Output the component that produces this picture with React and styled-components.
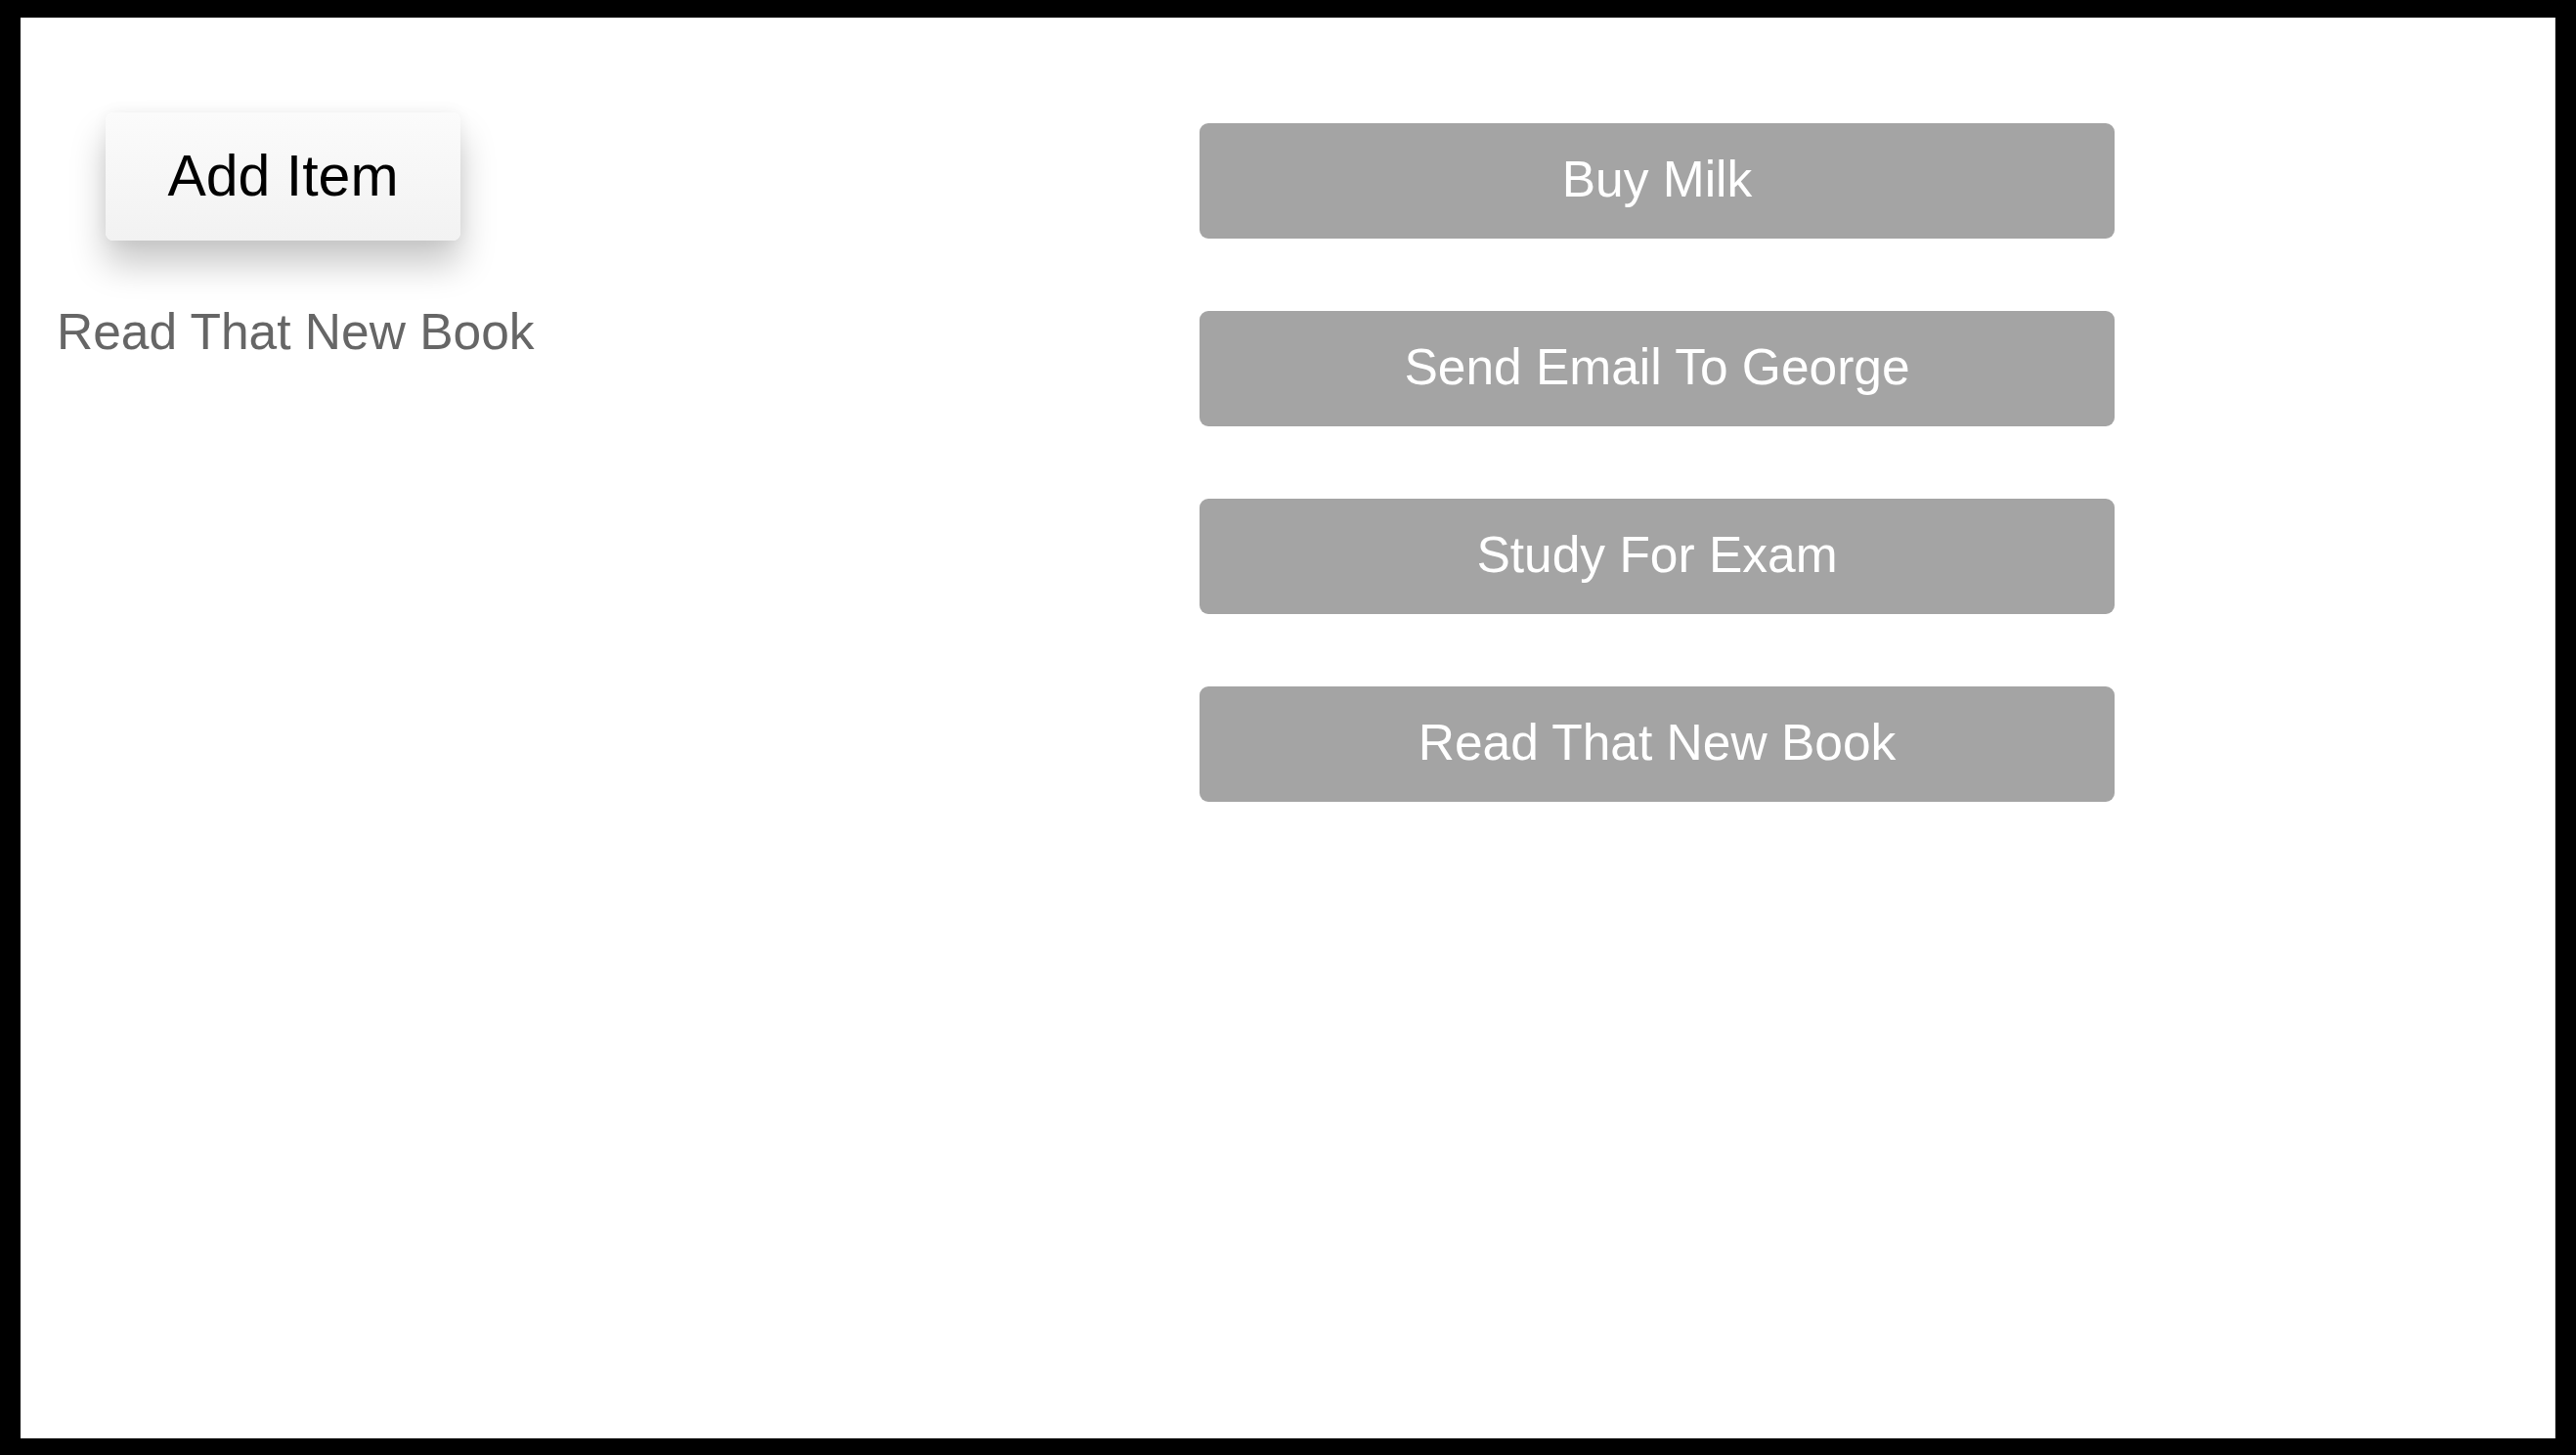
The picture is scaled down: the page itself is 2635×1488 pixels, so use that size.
import React from "react";
import styled, { createGlobalStyle } from "styled-components";

const GlobalStyle = createGlobalStyle`
  html, body {
    margin: 0;
    padding: 0;
    background: #000;
  }
  body {
    font-family: "Liberation Sans", Arial, sans-serif;
  }
`;

const Frame = styled.div`
  box-sizing: border-box;
  width: 2635px;
  height: 1488px;
  padding: 18px 21px 17px 21px;
  background: #000;
`;

const Screen = styled.main`
  box-sizing: border-box;
  height: 100%;
  background: #fff;
  border-right: 1px solid #dcdcdc;
  display: grid;
  grid-template-columns: 1206px 936px;
  align-items: start;
`;

const LeftColumn = styled.section`
  display: flex;
  flex-direction: column;
  align-items: flex-start;
  padding: 97px 0 0 37px;
`;

const AddButton = styled.button`
  box-sizing: border-box;
  width: 363px;
  height: 131px;
  margin-left: 50px;
  border: none;
  border-radius: 8px;
  background: linear-gradient(#fbfbfb, #f2f2f2);
  box-shadow: 0 24px 36px rgba(0, 0, 0, 0.22), 0 0 16px rgba(0, 0, 0, 0.05);
  font-family: "Liberation Sans", Arial, sans-serif;
  font-size: 59px;
  color: #000;
  line-height: 1;
  padding: 0;
  cursor: pointer;
`;

const LastItem = styled.p`
  margin: 68px 0 0 0;
  font-size: 51.5px;
  line-height: 1;
  color: #666;
`;

const ItemList = styled.section`
  display: flex;
  flex-direction: column;
  gap: 74px;
  padding-top: 108px;
`;

const ItemButton = styled.button`
  box-sizing: border-box;
  width: 100%;
  height: 118px;
  border: none;
  border-radius: 9px;
  background: #a4a4a4;
  color: #fff;
  font-family: "Liberation Sans", Arial, sans-serif;
  font-size: 51.5px;
  line-height: 1;
  padding: 0 0 2px 0;
  cursor: pointer;
`;

const items = [
  "Buy Milk",
  "Send Email To George",
  "Study For Exam",
  "Read That New Book",
];

export default function App() {
  return (
    <>
      <GlobalStyle />
      <Frame>
        <Screen>
          <LeftColumn>
            <AddButton>Add Item</AddButton>
            <LastItem>{items[items.length - 1]}</LastItem>
          </LeftColumn>
          <ItemList>
            {items.map((item) => (
              <ItemButton key={item}>{item}</ItemButton>
            ))}
          </ItemList>
        </Screen>
      </Frame>
    </>
  );
}
